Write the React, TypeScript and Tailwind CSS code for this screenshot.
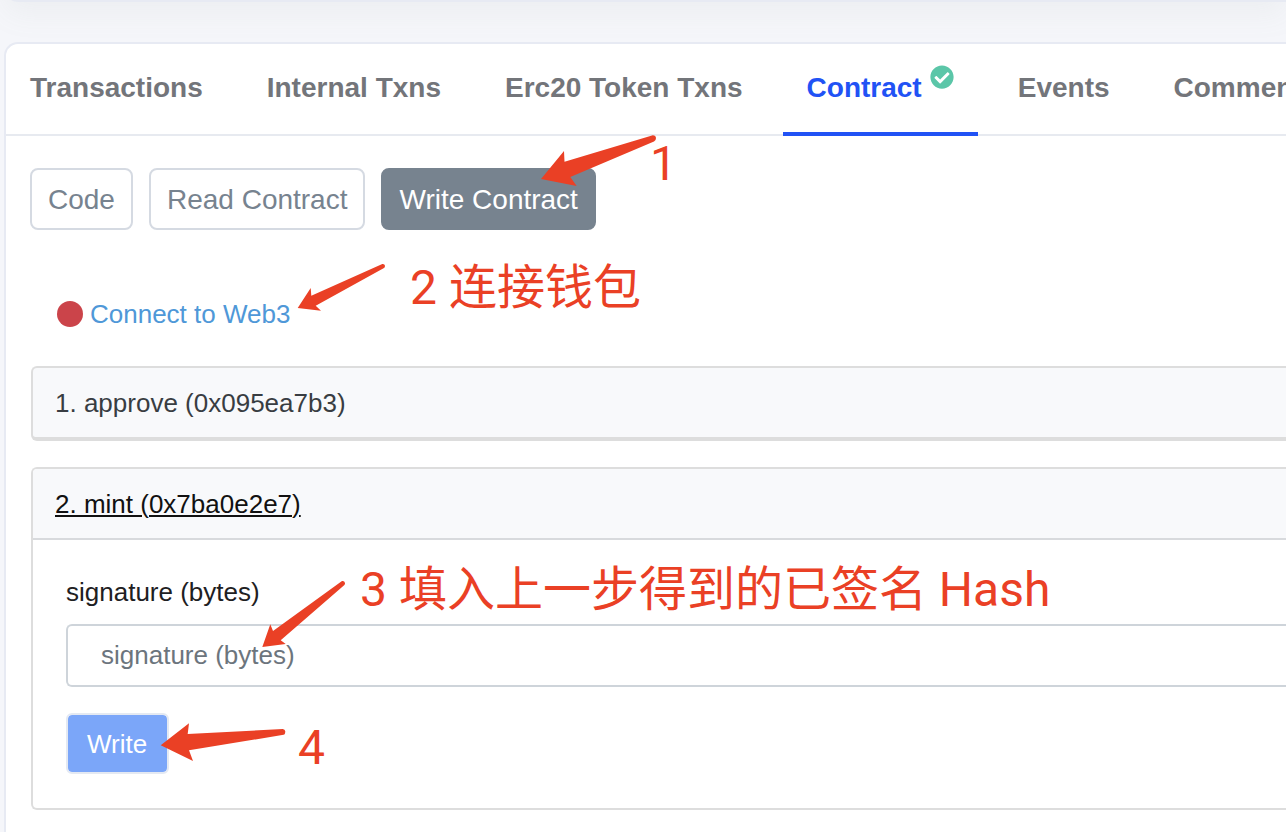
import { useState } from 'react'
import type { ReactNode } from 'react'
import clsx from 'clsx'
import { FaCheckCircle } from 'react-icons/fa'

const tabs = [
  'Transactions',
  'Internal Txns',
  'Erc20 Token Txns',
  'Contract',
  'Events',
  'Comments',
]

const modes = ['Code', 'Read Contract', 'Write Contract']

interface ArrowProps {
  className: string
  viewBox: string
  d: string
}

function Arrow({ className, viewBox, d }: ArrowProps) {
  return (
    <svg
      aria-hidden="true"
      viewBox={viewBox}
      className={clsx('pointer-events-none absolute fill-[#ea4025]', className)}
    >
      <path d={d} />
    </svg>
  )
}

interface NoteProps {
  className: string
  children: ReactNode
}

function Note({ className, children }: NoteProps) {
  return (
    <p
      className={clsx(
        "pointer-events-none absolute font-[Roboto,'Noto_Sans_CJK_SC',sans-serif] text-[48px] leading-[56px] whitespace-nowrap text-[#ea4025]",
        className,
      )}
    >
      {children}
    </p>
  )
}

export default function App() {
  const [tab, setTab] = useState('Contract')
  const [mode, setMode] = useState('Write Contract')
  const [signature, setSignature] = useState('')

  return (
    <main className="relative min-h-screen overflow-hidden bg-[#f5f6fa] pl-1 font-['Liberation_Sans',Arial,sans-serif] text-[26px] text-[#1e2022]">
      {/* bottom edge of the overview card */}
      <div className="-mt-[78px] h-20 rounded-bl-[14px] border-b-2 border-[#e7eaf3] bg-white shadow-[0_12px_30px_rgba(140,152,140,0.08)]" />

      <section className="relative mt-10 rounded-tl-[14px] border-t-2 border-l-2 border-[#e7eaf3] bg-white pb-[22px]">
        <nav className="flex gap-4 border-b-2 border-[#e7eaf0]">
          {tabs.map((name) => (
            <button
              key={name}
              type="button"
              onClick={() => setTab(name)}
              className={clsx(
                '-mb-[2px] flex shrink-0 gap-2 border-b-4 px-6 pt-[23px] pb-[23px] text-[28px] leading-[42px] font-bold',
                tab === name
                  ? 'border-[#2152f5] text-[#2152f5]'
                  : 'border-transparent text-[#73757a]',
              )}
            >
              {name}
              {name === 'Contract' && (
                <FaCheckCircle className="-mt-[2px] size-6 text-[#5bc6a8]" />
              )}
            </button>
          ))}
        </nav>

        <div className="pt-8 pl-6">
          <div className="flex gap-4">
            {modes.map((name) => (
              <button
                key={name}
                type="button"
                onClick={() => setMode(name)}
                className={clsx(
                  'rounded-[8px] border-2 px-4 pt-[9px] pb-[7px] text-[28px] leading-[42px]',
                  mode === name
                    ? 'border-[#77838f] bg-[#77838f] text-white'
                    : 'border-[#d5dae2] text-[#77838f]',
                )}
              >
                {name}
              </button>
            ))}
          </div>

          <div className="mt-16 mb-8 flex items-center gap-[7px] pl-[27px] leading-[40px]">
            <span className="size-[26px] rounded-full bg-[#cb444a]" />
            <a href="#connect" className="text-[#4f98d8]">
              Connect to Web3
            </a>
          </div>

          <div className="pl-px leading-[39px]">
            <div className="mb-[26px] rounded-l-[6px] border-2 border-r-0 border-b-4 border-[#dddddd] bg-[#f8f9fb] px-[22px] pt-4 pb-[14px]">
              <a href="#approve" className="text-[#383d42]">
                1. approve (0x095ea7b3)
              </a>
            </div>

            <div className="rounded-l-[6px] border-2 border-r-0 border-[#dddddd]">
              <div className="rounded-tl-[4px] border-b-2 border-[#d8dadd] bg-[#f8f9fb] px-[22px] pt-4 pb-[14px]">
                <a
                  href="#mint"
                  className="text-[#111111] underline decoration-2 underline-offset-2"
                >
                  2. mint (0x7ba0e2e7)
                </a>
              </div>
              <form
                className="pt-[33px] pb-[34px] pl-[33px]"
                onSubmit={(e) => e.preventDefault()}
              >
                <label htmlFor="signature" className="mb-3 block">
                  signature (bytes)
                </label>
                <input
                  id="signature"
                  value={signature}
                  onChange={(e) => setSignature(e.target.value)}
                  placeholder="signature (bytes)"
                  className="block h-[63px] w-full rounded-l-[6px] border-2 border-r-0 border-[#ced4da] px-[33px] placeholder:text-[#6c757d]"
                />
                <button
                  type="submit"
                  className="mt-[26px] block rounded-[6px] border-2 border-[#e4e9f2] bg-[#7ba6f9] bg-clip-padding pt-[10px] pr-5 pb-2 pl-[19px] text-white"
                >
                  Write
                </button>
              </form>
            </div>
          </div>
        </div>
      </section>

      {/* step notes */}
      <Arrow
        className="top-[134px] left-[540px] h-[54px] w-[118px]"
        viewBox="540 134 118 54"
        d="M541 179 L564 151 L564.5 161.7 L652 135.4 Q655.6 135 656 138 Q656 140.6 654 141.5 L570.3 177 L576.7 186 Z"
      />
      <Note className="top-[136px] left-[650px]">1</Note>

      <Arrow
        className="top-[262px] left-[296px] h-[50px] w-[90px]"
        viewBox="296 262 90 50"
        d="M297.7 308 L310.7 288 L311.3 295.7 L382.3 264.1 Q384.6 263.8 385 265.7 Q385 267.4 384 268 L315.7 305.7 L321 310.7 Z"
      />
      <Note className="top-[260px] left-[410px]">2 连接钱包</Note>

      <Arrow
        className="top-[579px] left-[260px] h-[70px] w-[86px]"
        viewBox="260 579 86 70"
        d="M262.3 647 L270.3 624.3 L273 631 L342 581.1 Q344.4 580.6 345 583 Q345.2 584.2 344.4 585 L280.7 640.3 L285.7 644 Z"
      />
      <Note className="top-[562px] left-[360px]">
        3 填入上一步得到的已签名 Hash
      </Note>

      <Arrow
        className="top-[722px] left-[160px] h-[40px] w-[126px]"
        viewBox="160 722 126 40"
        d="M160.7 745.3 L189 723.3 L187.7 734 L282.7 729 Q285 729.2 285.3 731.2 L285.1 733 Q285 734.6 283.6 734.8 L189 750.3 L193 761 Z"
      />
      <Note className="top-[720px] left-[298px]">4</Note>
    </main>
  )
}
